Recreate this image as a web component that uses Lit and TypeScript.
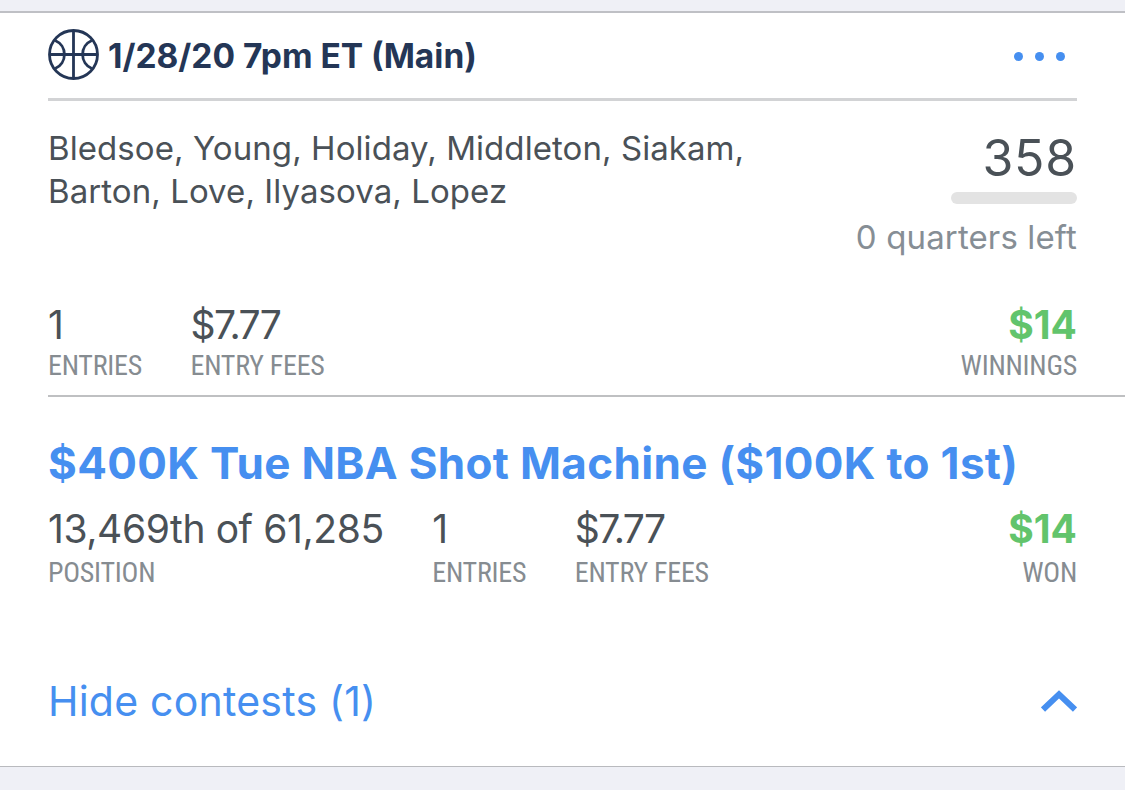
import { LitElement, html, css, svg } from 'lit';
import { customElement, property } from 'lit/decorators.js';

@customElement('contest-stat')
export class ContestStat extends LitElement {
  @property() value = '';
  @property() label = '';

  static styles = css`
    :host {
      display: flex;
      flex-direction: column;
      gap: var(--stat-gap, 0);
      white-space: nowrap;
    }
    :host([win]) {
      align-items: flex-end;
      margin-left: auto;
    }
    .value {
      font: 400 39px/48px Inter, sans-serif;
      letter-spacing: -0.4px;
      color: #4a5157;
    }
    :host([money]) .value {
      letter-spacing: -1.6px;
    }
    :host([win]) .value {
      font-weight: 700;
      letter-spacing: 0;
      color: #62c46c;
    }
    .label {
      font: 400 28px/34px 'Roboto Condensed', 'Liberation Sans Narrow', sans-serif;
      letter-spacing: -0.25px;
      color: #868c91;
    }
  `;

  render() {
    return html`
      <span class="value">${this.value}</span>
      <span class="label">${this.label}</span>
    `;
  }
}

const ballIcon = svg`
  <g fill="none" stroke="#243656" stroke-width="2.8">
    <circle cx="25.5" cy="25.5" r="24"/>
    <path d="M25.5 1.5v48M1.5 25.5h48"/>
    <path d="M7.2 11.5A15.25 15.25 0 0 1 7.2 39.5"/>
    <path d="M43.8 11.5A15.25 15.25 0 0 0 43.8 39.5"/>
  </g>`;

@customElement('app-root')
export class AppRoot extends LitElement {
  static styles = css`
    :host {
      display: block;
      box-sizing: border-box;
      height: 790px;
      padding-top: 11px;
      background: #eff0f6;
      overflow: hidden;
    }
    .card {
      box-sizing: border-box;
      height: 756px;
      padding-left: 48px;
      background: #fff;
      border-top: 2px solid #bfc0c5;
      border-bottom: 1px solid #b9babe;
    }
    .header {
      display: flex;
      align-items: center;
      height: 85px;
      margin-right: 48px;
      border-bottom: 3px solid #d2d3d5;
    }
    .ball {
      width: 51px;
      height: 51px;
      margin-bottom: 2px;
    }
    .slate {
      margin-left: 9px;
      font: 700 33.5px/40px Inter, sans-serif;
      color: #243656;
      white-space: nowrap;
    }
    .more {
      display: flex;
      gap: 12px;
      margin-left: auto;
      padding: 2px 12px 0 0;
    }
    .dot {
      width: 9px;
      height: 9px;
      border-radius: 50%;
      background: #468ff0;
    }
    .lineup {
      display: flex;
      justify-content: space-between;
      height: 200px;
      margin-right: 48px;
    }
    .players {
      padding-top: 26px;
      font: 400 33px/43px Inter, sans-serif;
      letter-spacing: 0.07px;
      color: #4a5157;
      white-space: nowrap;
    }
    .score {
      display: flex;
      flex-direction: column;
      align-items: flex-end;
      padding-top: 27px;
    }
    .points {
      font: 400 50px/60px Inter, sans-serif;
      letter-spacing: 0.8px;
      color: #4a5157;
    }
    .progress {
      width: 126px;
      height: 12px;
      margin-top: 4px;
      border-radius: 6px;
      background: #e3e3e3;
    }
    .left {
      margin-top: 12px;
      font: 400 33px/42px Inter, sans-serif;
      letter-spacing: 0.13px;
      color: #868e95;
      white-space: nowrap;
    }
    .stats {
      display: flex;
      gap: 48.5px;
      padding-right: 48px;
    }
    .totals {
      height: 94px;
      border-bottom: 2px solid #bfc0c2;
    }
    .title {
      margin-top: 36px;
      font: 700 44px/60px Inter, sans-serif;
      letter-spacing: 0.33px;
      color: #468ff0;
      white-space: nowrap;
    }
    .entry {
      --stat-gap: 3px;
      height: 130px;
      padding-top: 12px;
    }
    .toggle {
      display: flex;
      align-items: center;
      justify-content: space-between;
      height: 131px;
      margin-right: 48px;
      font: 400 41px/50px Inter, sans-serif;
      letter-spacing: 0.22px;
      color: #468ff0;
    }
    .chevron {
      width: 36px;
      height: 22px;
    }
  `;

  render() {
    return html`
      <div class="card">
        <div class="header">
          <svg class="ball" viewBox="0 0 51 51">${ballIcon}</svg>
          <span class="slate">1/28/20 7pm ET (Main)</span>
          <div class="more">
            <span class="dot"></span>
            <span class="dot"></span>
            <span class="dot"></span>
          </div>
        </div>
        <div class="lineup">
          <div class="players">
            Bledsoe, Young, Holiday, Middleton, Siakam,<br />
            Barton, Love, Ilyasova, Lopez
          </div>
          <div class="score">
            <span class="points">358</span>
            <div class="progress"></div>
            <span class="left">0 quarters left</span>
          </div>
        </div>
        <div class="stats totals">
          <contest-stat value="1" label="ENTRIES"></contest-stat>
          <contest-stat money value="$7.77" label="ENTRY FEES"></contest-stat>
          <contest-stat win value="$14" label="WINNINGS"></contest-stat>
        </div>
        <div class="title">$400K Tue NBA Shot Machine ($100K to 1st)</div>
        <div class="stats entry">
          <contest-stat value="13,469th of 61,285" label="POSITION"></contest-stat>
          <contest-stat value="1" label="ENTRIES"></contest-stat>
          <contest-stat money value="$7.77" label="ENTRY FEES"></contest-stat>
          <contest-stat win value="$14" label="WON"></contest-stat>
        </div>
        <div class="toggle">
          <span>Hide contests (1)</span>
          <svg class="chevron" viewBox="0 0 36 22">
            <path d="M2 19.5 18 4.3 34 19.5" fill="none" stroke="#468ff0" stroke-width="6"/>
          </svg>
        </div>
      </div>
    `;
  }
}
